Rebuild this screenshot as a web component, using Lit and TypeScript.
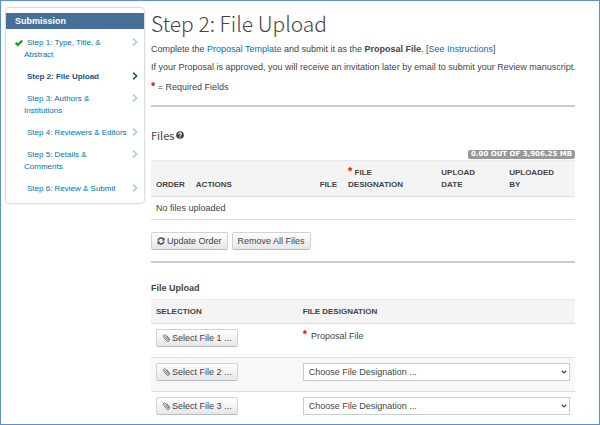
import { LitElement, html, css, svg } from "lit";
import { customElement, property } from "lit/decorators.js";

interface Step {
  label: string;
  done?: boolean;
  current?: boolean;
}

const STEPS: Step[] = [
  { label: "Step 1: Type, Title, &\nAbstract", done: true },
  { label: "Step 2: File Upload", current: true },
  { label: "Step 3: Authors &\nInstitutions" },
  { label: "Step 4: Reviewers & Editors" },
  { label: "Step 5: Details &\nComments" },
  { label: "Step 6: Review & Submit" },
];

const ICONS = {
  check: svg`<path d="M1 5.8 L4.2 9 L11 2.2" fill="none" stroke="currentColor" stroke-width="3.2"/>`,
  chevron: svg`<path d="M3.2 1 L8.4 6 L3.2 11" fill="none" stroke="currentColor" stroke-width="2.4"/>`,
  down: svg`<path d="M1.5 3.5 L6 8 L10.5 3.5" fill="none" stroke="currentColor" stroke-width="2.2"/>`,
  help: svg`<circle cx="6" cy="6" r="5.8" fill="currentColor"/><path d="M4 4.7 C4 2.2 8 2.2 8 4.5 C8 5.9 6.1 5.8 6.1 7.3" fill="none" stroke="#fff" stroke-width="1.6"/><rect x="5.2" y="8.2" width="1.8" height="1.7" fill="#fff"/>`,
  refresh: svg`<path d="M1.6 5.4 A4.5 4.5 0 0 1 9.4 3 M10.4 6.6 A4.5 4.5 0 0 1 2.6 9" fill="none" stroke="currentColor" stroke-width="2"/><path d="M11.4 0.8 V5.2 H7 Z M0.6 11.2 V6.8 H5 Z" fill="currentColor"/>`,
  clip: svg`<path d="M4.2 3.6 L8 8.6 C9.2 10 10.8 8.8 9.8 7.4 L5.4 1.8 C3.8 0 .8 2 2.2 4.2 L7 10.4 C8.8 12.6 12.6 10.4 11 7.4 L7.4 2.6" fill="none" stroke="currentColor" stroke-width="1"/>`,
};

@customElement("ui-icon")
class UiIcon extends LitElement {
  @property() name: keyof typeof ICONS = "check";
  static styles = css`
    :host { display: inline-block; width: 8px; height: 8px; flex: none; }
    svg { display: block; width: 100%; height: 100%; }
  `;
  render() {
    return html`<svg viewBox="0 0 12 12" aria-hidden="true">${ICONS[this.name]}</svg>`;
  }
}

@customElement("step-nav")
class StepNav extends LitElement {
  static styles = css`
    :host {
      display: block;
      box-sizing: border-box;
      border: 1px solid #dcdcdc;
      border-radius: 4px;
      box-shadow: 0 0 2px #e4e4e4;
      padding: 5px 0 3px;
    }
    .title {
      margin: 0 0 3px;
      padding: 0 9px;
      background: #477099;
      color: #fff;
      font-size: 9px;
      line-height: 16px;
      font-weight: bold;
    }
    .list { list-style: none; margin: 0; padding: 0; }
    .step {
      display: grid;
      grid-template-columns: 9px 1fr 7px;
      padding: 5px 5px 5px 9px;
      font-size: 8px;
      line-height: 12px;
      color: #0073ae;
      text-decoration: none;
    }
    .label { text-indent: 3px; }
    .line { display: block; }
    .line + .line { text-indent: 0; }
    .mark { color: #0ba50b; margin-top: 2px; }
    .arrow { color: #a3cde3; margin-top: 1px; justify-self: end; }
    .current { color: #205081; font-weight: bold; }
    .current .arrow { color: #205081; }
  `;
  render() {
    return html`
      <h2 class="title">Submission</h2>
      <ul class="list">
        ${STEPS.map(
          (s) => html`<li>
            <a class="step ${s.current ? "current" : ""}" href="#">
              <span>${s.done ? html`<ui-icon class="mark" name="check"></ui-icon>` : ""}</span>
              <span class="label">${s.label.split("\n").map((t) => html`<span class="line">${t}</span> `)}</span>
              <ui-icon class="arrow" name="chevron"></ui-icon>
            </a>
          </li>`
        )}
      </ul>
    `;
  }
}

@customElement("app-root")
class AppRoot extends LitElement {
  static styles = css`
    :host {
      display: grid;
      grid-template-columns: 140px minmax(0, 1fr);
      gap: 6px;
      align-items: start;
      box-sizing: border-box;
      min-height: 100vh;
      padding: 6px 24px 0 4px;
      border: 1px solid #5b93c9;
      background: #fff;
      color: #444;
      font: 9px/12px "Liberation Sans", Arial, sans-serif;
    }
    a { color: #0073ae; text-decoration: none; }
    .heading, .section {
      font-family: "Noto Sans CJK SC", "Noto Sans", sans-serif;
      color: #444;
    }
    .heading { margin: 0 0 6px; padding-top: 2px; font-size: 21px; line-height: 28px; font-weight: 300; }
    p { margin: 0 0 6px; white-space: nowrap; }
    .required { margin: 8px 0 12px; }
    .star { color: #f00; font-weight: bold; font-size: 11px; line-height: 8px; }
    .rule { margin: 0; border: 0; height: 2px; background: #ccc; }
    .section {
      display: flex;
      align-items: center;
      gap: 2px;
      margin: 19px 0 6px;
      font-size: 11px;
      line-height: 18px;
      font-weight: 400;
    }
    .quota { display: flex; justify-content: flex-end; margin-bottom: 1px; }
    .badge {
      padding: 0 3px;
      border-radius: 2px;
      background: #999;
      color: #fff;
      font: bold 7px/9px "DejaVu Sans", Verdana, sans-serif;
    }
    table { width: 100%; border-collapse: collapse; table-layout: fixed; }
    th {
      box-sizing: border-box;
      padding: 6px 0 5px 5px;
      background: #f4f4f4;
      border-top: 1px solid #eaeaea;
      border-bottom: 1px solid #ddd;
      font-size: 8px;
      line-height: 12px;
      text-align: left;
      vertical-align: bottom;
    }
    td { padding: 5px; text-align: left; vertical-align: top; }
    .files { border-bottom: 1px solid #ddd; }
    .order { width: 9.4%; }
    .actions { width: 29.2%; }
    .file { width: 6.7%; }
    .kind { width: 22%; }
    .date { width: 16%; }
    .buttons { display: flex; gap: 4px; margin: 12px 0 11px; }
    button {
      display: inline-flex;
      align-items: center;
      gap: 2px;
      height: 18px;
      padding: 0 5px;
      border: 1px solid #d2d2d2;
      border-bottom-color: #bbb;
      border-radius: 2px;
      background: linear-gradient(#fff, #e6e6e6);
      color: #444;
      font: inherit;
    }
    .subhead { margin: 18px 0 4px; font-size: 9px; line-height: 14px; font-weight: bold; }
    .uploads td { height: 23px; border-top: 1px solid #ddd; }
    .uploads tr:last-child td { height: auto; padding-bottom: 0; }
    .uploads tr:nth-child(even) td { background: #f8f8f8; }
    .selection { width: 34.6%; }
    .fixed { display: flex; gap: 4px; padding-top: 1px; }
    .picker { display: grid; align-items: center; }
    select {
      grid-area: 1 / 1;
      appearance: none;
      width: 100%;
      height: 18px;
      padding: 0 5px;
      border: 1px solid #ccc;
      border-radius: 0;
      background: #fff;
      color: #444;
      font: inherit;
    }
    .caret { grid-area: 1 / 1; justify-self: end; width: 6px; height: 6px; margin-right: 3px; pointer-events: none; }
  `;

  private uploadRow(n: number) {
    return html`<tr>
      <td><button type="button"><ui-icon name="clip"></ui-icon>Select File ${n} ...</button></td>
      <td>
        ${n === 1
          ? html`<span class="fixed"><span class="star">*</span><span>Proposal File</span></span>`
          : html`<span class="picker">
              <select aria-label="File designation ${n}"><option>Choose File Designation ...</option></select>
              <ui-icon class="caret" name="down"></ui-icon>
            </span>`}
      </td>
    </tr>`;
  }

  render() {
    return html`
      <step-nav></step-nav>
      <main>
        <h1 class="heading">Step 2: File Upload</h1>
        <p>Complete the <a href="#">Proposal Template</a> and submit it as the <b>Proposal File</b>. [<a href="#">See Instructions</a>]</p>
        <p>If your Proposal is approved, you will receive an invitation later by email to submit your Review manuscript.</p>
        <p class="required"><span class="star">*</span> = Required Fields</p>
        <hr class="rule" />
        <h2 class="section">Files<ui-icon name="help"></ui-icon></h2>
        <div class="quota"><span class="badge">0.00 OUT OF 3,906.25 MB</span></div>
        <table class="files">
          <thead>
            <tr>
              <th class="order">ORDER</th>
              <th class="actions">ACTIONS</th>
              <th class="file">FILE</th>
              <th class="kind"><span class="star">*</span> FILE<br />DESIGNATION</th>
              <th class="date">UPLOAD<br />DATE</th>
              <th>UPLOADED<br />BY</th>
            </tr>
          </thead>
          <tbody><tr><td colspan="6">No files uploaded</td></tr></tbody>
        </table>
        <div class="buttons">
          <button type="button"><ui-icon name="refresh"></ui-icon>Update Order</button>
          <button type="button">Remove All Files</button>
        </div>
        <hr class="rule" />
        <h3 class="subhead">File Upload</h3>
        <table class="uploads">
          <thead><tr><th class="selection">SELECTION</th><th>FILE DESIGNATION</th></tr></thead>
          <tbody>${[1, 2, 3].map((n) => this.uploadRow(n))}</tbody>
        </table>
      </main>
    `;
  }
}
